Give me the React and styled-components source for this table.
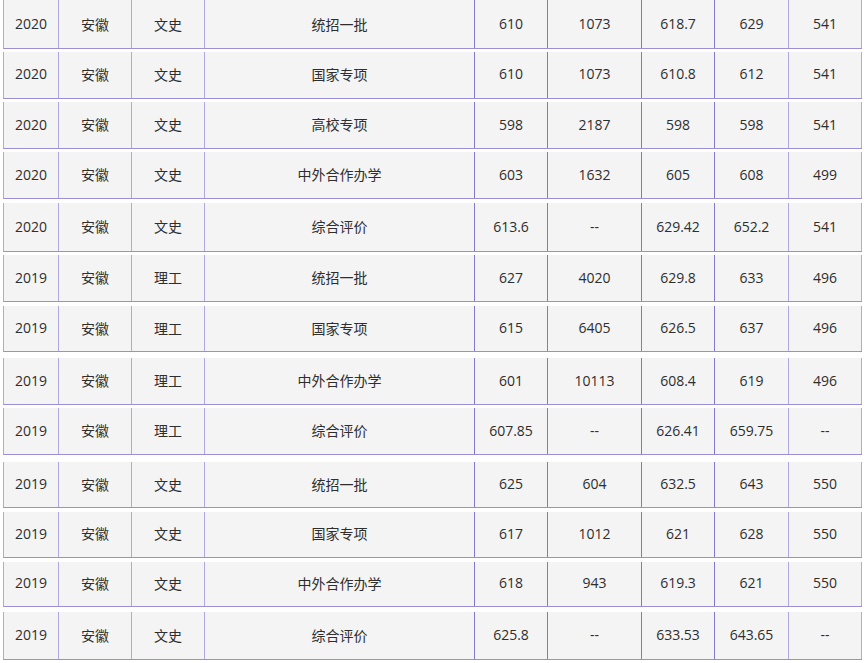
import React from "react";
import styled, { createGlobalStyle } from "styled-components";

const Global = createGlobalStyle`
  html, body { margin: 0; padding: 0; background: #ffffff; }
  body { font-family: "Open Sans", "Noto Sans CJK SC", sans-serif; }
`;

const Table = styled.div`
  display: flex;
  flex-direction: column;
  padding-left: 3px;
  width: 859px;
`;

const Row = styled.div`
  display: grid;
  grid-template-columns: 55px 73px 73px 270px 73px 94px 73px 74px 1fr;
  box-sizing: border-box;
  height: ${(p) => p.$h}px;
  margin-top: ${(p) => p.$mt}px;
  background: #f4f4f4;
  border-left: 1px solid #b1a8e0;
  border-bottom: 1px solid #9a8fd4;
`;

const Cell = styled.div`
  display: flex;
  align-items: center;
  justify-content: center;
  box-sizing: border-box;
  padding-bottom: ${(p) => p.$pb}px;
  border-right: 1px solid ${(p) => (p.$dark ? "#8578c9" : "#b1a8e0")};
  font-size: 14px;
  color: #2e2e2e;
  white-space: nowrap;
`;

const rows = [
  [0, 49, 1, ["2020", "安徽", "文史", "统招一批", "610", "1073", "618.7", "629", "541"]],
  [3, 47, 3, ["2020", "安徽", "文史", "国家专项", "610", "1073", "610.8", "612", "541"]],
  [3, 47, 2, ["2020", "安徽", "文史", "高校专项", "598", "2187", "598", "598", "541"]],
  [3, 47, 2, ["2020", "安徽", "文史", "中外合作办学", "603", "1632", "605", "608", "499"]],
  [4, 49, 2, ["2020", "安徽", "文史", "综合评价", "613.6", "--", "629.42", "652.2", "541"]],
  [3, 47, 2, ["2019", "安徽", "理工", "统招一批", "627", "4020", "629.8", "633", "496"]],
  [4, 46, 2, ["2019", "安徽", "理工", "国家专项", "615", "6405", "626.5", "637", "496"]],
  [6, 47, 2, ["2019", "安徽", "理工", "中外合作办学", "601", "10113", "608.4", "619", "496"]],
  [3, 47, 2, ["2019", "安徽", "理工", "综合评价", "607.85", "--", "626.41", "659.75", "--"]],
  [7, 46, 2, ["2019", "安徽", "文史", "统招一批", "625", "604", "632.5", "643", "550"]],
  [4, 46, 3, ["2019", "安徽", "文史", "国家专项", "617", "1012", "621", "628", "550"]],
  [4, 45, 3, ["2019", "安徽", "文史", "中外合作办学", "618", "943", "619.3", "621", "550"]],
  [5, 48, 2, ["2019", "安徽", "文史", "综合评价", "625.8", "--", "633.53", "643.65", "--"]],
];

export default function App() {
  return (
    <>
      <Global />
      <Table>
        {rows.map(([mt, h, pb, cells], i) => (
          <Row key={i} $mt={mt} $h={h}>
            {cells.map((c, j) => (
              <Cell key={j} $pb={pb} $dark={j >= 3 && j <= 6}>
                {c}
              </Cell>
            ))}
          </Row>
        ))}
      </Table>
    </>
  );
}
